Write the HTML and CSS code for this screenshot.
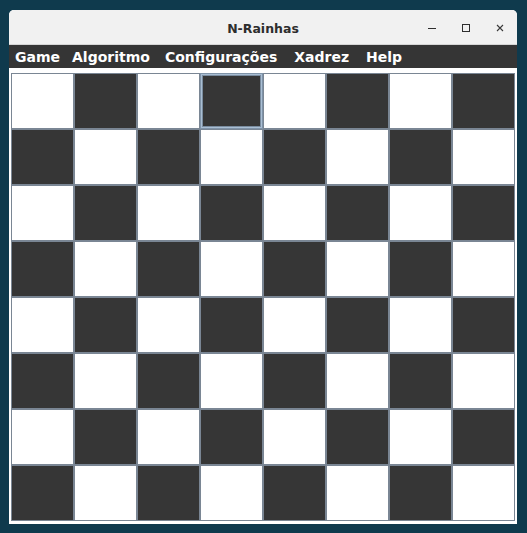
FILE: index.html
```html
<!DOCTYPE html>
<html lang="pt">
<head>
<meta charset="utf-8">
<title>N-Rainhas</title>
<link rel="stylesheet" href="styles.css">
</head>
<body>
<div class="window">
  <div class="titlebar">
    <div class="title">N-Rainhas</div>
    <div class="controls">
      <svg class="ctl" width="10" height="10" viewBox="0 0 10 10"><path d="M1 5.5h8" stroke="#2e2e2e" stroke-width="1"/></svg>
      <svg class="ctl" width="10" height="10" viewBox="0 0 10 10"><rect x="1.5" y="1.5" width="7" height="7" fill="none" stroke="#2e2e2e" stroke-width="1"/></svg>
      <svg class="ctl" width="10" height="10" viewBox="0 0 10 10"><path d="M2 2l6 6M8 2l-6 6" stroke="#3a3a3a" stroke-width="1.1"/></svg>
    </div>
  </div>
  <div class="menubar">
    <span class="menu m1">Game</span>
    <span class="menu m2">Algoritmo</span>
    <span class="menu m3">Configurações</span>
    <span class="menu m4">Xadrez</span>
    <span class="menu m5">Help</span>
  </div>
  <div class="content">
    <div class="board" id="board">
      <div class="cell"></div><div class="cell dark"></div><div class="cell"></div><div class="cell dark focus"></div><div class="cell"></div><div class="cell dark"></div><div class="cell"></div><div class="cell dark"></div>
      <div class="cell dark"></div><div class="cell"></div><div class="cell dark"></div><div class="cell"></div><div class="cell dark"></div><div class="cell"></div><div class="cell dark"></div><div class="cell"></div>
      <div class="cell"></div><div class="cell dark"></div><div class="cell"></div><div class="cell dark"></div><div class="cell"></div><div class="cell dark"></div><div class="cell"></div><div class="cell dark"></div>
      <div class="cell dark"></div><div class="cell"></div><div class="cell dark"></div><div class="cell"></div><div class="cell dark"></div><div class="cell"></div><div class="cell dark"></div><div class="cell"></div>
      <div class="cell"></div><div class="cell dark"></div><div class="cell"></div><div class="cell dark"></div><div class="cell"></div><div class="cell dark"></div><div class="cell"></div><div class="cell dark"></div>
      <div class="cell dark"></div><div class="cell"></div><div class="cell dark"></div><div class="cell"></div><div class="cell dark"></div><div class="cell"></div><div class="cell dark"></div><div class="cell"></div>
      <div class="cell"></div><div class="cell dark"></div><div class="cell"></div><div class="cell dark"></div><div class="cell"></div><div class="cell dark"></div><div class="cell"></div><div class="cell dark"></div>
      <div class="cell dark"></div><div class="cell"></div><div class="cell dark"></div><div class="cell"></div><div class="cell dark"></div><div class="cell"></div><div class="cell dark"></div><div class="cell"></div>
    </div>
  </div>
</div>
</body>
</html>
```

FILE: styles.css
```css
html, body {
  margin: 0;
  padding: 0;
}
body {
  background: #0f3a4d;
  width: 527px;
  height: 533px;
  overflow: hidden;
  padding: 10px 0 0 9px;
  box-sizing: border-box;
}
.window {
  width: 508px;
  height: 514px;
  background: #ffffff;
  border-radius: 5px 5px 0 0;
  overflow: hidden;
  display: flex;
  flex-direction: column;
}
.titlebar {
  height: 35px;
  background: #f1f1f1;
  position: relative;
  display: flex;
  align-items: center;
  justify-content: center;
  border-bottom: 1px solid #d6d6d6;
  box-sizing: border-box;
}
.title {
  font-family: "DejaVu Sans", sans-serif;
  font-weight: bold;
  font-size: 12.5px;
  color: #2d2d2d;
  margin-top: 2px;
}
.controls {
  position: absolute;
  right: 12px;
  top: 13px;
  display: flex;
  gap: 24px;
  align-items: center;
}
.ctl {
  display: block;
}
.menubar {
  height: 23px;
  background: #353535;
  display: flex;
  align-items: center;
  padding-left: 6px;
  box-sizing: border-box;
}
.menu {
  font-family: "DejaVu Sans", sans-serif;
  font-weight: bold;
  font-size: 14px;
  color: #ffffff;
  margin-top: 1px;
}
.m2 { margin-left: 12px; }
.m3 { margin-left: 15px; }
.m4 { margin-left: 17px; }
.m5 { margin-left: 17px; }
.content {
  flex: 1;
  padding: 5px 2px 0 2px;
}
.board {
  display: grid;
  grid-template-columns: repeat(8, 63px);
  grid-template-rows: repeat(8, 56px);
  width: 504px;
}
.cell {
  background: #ffffff;
  border: 1px solid #7a8694;
  box-sizing: border-box;
}
.cell.dark {
  background: #363636;
}
.cell.focus {
  border-color: #7f93a8;
  box-shadow: inset 0 0 0 1px #a9bed3, inset 0 0 0 2px #7a8c9f;
}
```
